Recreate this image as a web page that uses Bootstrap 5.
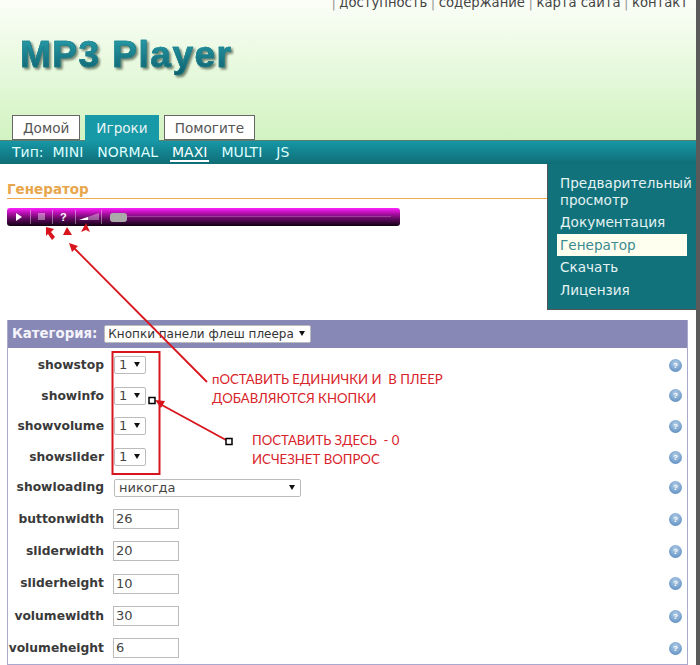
<!DOCTYPE html>
<html lang="ru">
<head>
<meta charset="UTF-8">
<title>MP3 Player</title>
<link href="https://cdn.jsdelivr.net/npm/bootstrap@5.3.0/dist/css/bootstrap.min.css" rel="stylesheet">
<style>
html, body { height: 665px; overflow: hidden; }
body { background: #fff; font-family: "DejaVu Sans", Verdana, sans-serif; color: #333; }
.page-wrap { position: relative; width: 700px; height: 665px; border-right: 4px solid #5a5a5a; overflow: hidden; }
.top-head { display: flow-root; height: 141px; background: linear-gradient(#fbfef8, #d2f3c1); border-bottom: 1px solid #5d7d70; padding-left: 12px; }
.top-links { height: 9px; font-size: 13.2px; line-height: 16px; color: #444; margin-top: -5px; padding-right: 8px; white-space: nowrap; gap: 3.5px; }
.top-links i { font-style: normal; color: #999; }
.logo-text { font: bold 37px/40px "Liberation Sans", Arial, sans-serif; letter-spacing: 1.5px; margin: 31px 0 0 8px; width: max-content;
  background: linear-gradient(#2aa0ad, #0e5f6c); -webkit-background-clip: text; background-clip: text; color: transparent;
  -webkit-text-stroke: .6px #1a7f8c;
  filter: drop-shadow(2px 2px 1px rgba(50,70,50,.65)); }
.tab-row { gap: 5px; margin-top: 40px; height: 26px; }
.tab-item { height: 25px; background: #fff; border: 1px solid #666; font-size: 13.6px; line-height: 24px; padding: 0 10px; color: #555; }
.tab-item.on { background: #1799a7; color: #e8f4f4; border-color: #1799a7; border-bottom: 0; height: 26px; }
.type-bar { height: 23px; background: linear-gradient(#1797a6, #0f6d76); color: #dff; font-size: 14px; line-height: 22px; padding-left: 12px; gap: 14px; }
.type-bar .lead-word { margin-right: -5px; }
.type-bar .on { border-bottom: 2px solid #fff; height: 21px; padding: 0 2px; margin: 0 -2px; color: #fff; }
.top-area { height: 156px; }
.content-left { width: 547px; padding-left: 7px; }
.gen-title { font-size: 13.5px; font-weight: bold; line-height: 18px; color: #e8a64c; border-bottom: 1px solid #f0ad4e; padding: 16px 0 8px; height: 35px; margin-bottom: 9px; }
.player-bar { width: 393px; height: 18px; border-radius: 3px; background: linear-gradient(#ff20ff 0, #b010a8 30%, #600a60 60%, #100010 100%); position: relative; }
.player-bar > * { position: absolute; }
.pl-sep { top: 2px; width: 1px; height: 14px; background: rgba(255,255,255,.4); }
.pl-play { left: 9px; top: 5px; border-left: 6px solid #fff; border-top: 4px solid transparent; border-bottom: 4px solid transparent; }
.pl-stop { left: 31px; top: 5px; width: 7px; height: 7px; background: rgba(255,255,255,.4); }
.pl-info { left: 53px; top: 0; color: #fff; font: bold 11px/18px "Liberation Sans", sans-serif; }
.pl-vol { left: 72px; top: 5px; width: 20px; height: 7px; background: linear-gradient(90deg, #fff 45%, rgba(255,255,255,.35) 45%); clip-path: polygon(0 100%, 100% 0, 100% 100%); }
.pl-track { left: 110px; right: 9px; top: 8px; height: 1px; background: rgba(255,255,255,.2); }
.pl-thumb { left: 103px; top: 5px; width: 17px; height: 9px; border-radius: 3px; background: #aaa; }
.side-menu { width: 149px; height: 146px; background: #12727c; border-left: 1px solid #555; border-bottom: 1px solid #555; padding: 8px 9px 0 9px; font-size: 13.6px; line-height: 16.5px; color: #e4f3f3; }
.side-menu div { padding: 3px 3px; }
.side-menu div.on { background: #fffff0; color: #3a8a90; }
.gen-panel { margin-left: 7px; width: 681px; height: 345px; border: 1px solid #a9a9cf; border-top: 0; }
.gen-cat { height: 28px; background: #8888b6; padding-left: 4px; gap: 7px; color: #f4f4fa; font-weight: bold; font-size: 13.3px; }
.gen-rows { padding-top: 2px; }
.gen-row { height: 30.6px; font-size: 12.3px; font-weight: bold; color: #3a3a3a; }
.gen-row.tall-row { height: 32.3px; }
.gen-row .row-name { width: 96px; text-align: right; margin-right: 9px; white-space: nowrap; }
.sel-box { height: 18px; border: 1px solid #bbb; border-radius: 2px; background: #fff; font: 13px/16px "DejaVu Sans", sans-serif; color: #444; padding: 0 4px; position: relative; white-space: nowrap; }
.sel-box::after { content: ""; position: absolute; right: 5px; top: 5px; border-top: 5px solid #111; border-left: 3px solid transparent; border-right: 3px solid transparent; }
.sel-short { width: 32px; margin-left: 1px; }
.sel-long { width: 187px; margin-left: 1px; }
.sel-cat { width: 207px; color: #333; font-weight: normal; font-size: 12px; padding-left: 3px; }
.num-box { width: 66px; height: 20px; border: 1px solid #bbb; background: #fff; font-size: 13px; font-weight: normal; line-height: 18px; color: #444; padding-left: 2px; }
.help-dot { width: 13px; height: 13px; border-radius: 50%; margin-left: auto; margin-right: 5px; background: radial-gradient(circle at 50% 35%, #b5cfe8, #5b8cc0 85%); color: #fff; font: bold 8px/13px "Liberation Sans", sans-serif; text-align: center; }
.note-layer { position: absolute; left: 0; top: 0; pointer-events: none; }
.note-text { position: absolute; color: #d9232a; font: 13.2px/19px Lato, "Open Sans", sans-serif; white-space: nowrap; }
</style>
</head>
<body>
<div class="page-wrap">
  <div class="top-head">
    <div class="top-links d-flex justify-content-end">
      <i>|</i><span>доступность</span><i>|</i><span>содержание</span><i>|</i><span>карта сайта</span><i>|</i><span>контакт</span>
    </div>
    <div class="logo-text">MP3 Player</div>
    <div class="tab-row d-flex">
      <div class="tab-item">Домой</div>
      <div class="tab-item on">Игроки</div>
      <div class="tab-item">Помогите</div>
    </div>
  </div>
  <div class="type-bar d-flex">
    <span class="lead-word">Тип:</span><span>MINI</span><span>NORMAL</span><span class="on">MAXI</span><span>MULTI</span><span>JS</span>
  </div>

  <div class="top-area d-flex">
    <div class="content-left">
      <div class="gen-title">Генератор</div>
      <div class="player-bar">
        <span class="pl-play"></span>
        <span class="pl-sep" style="left:23px"></span>
        <span class="pl-stop"></span>
        <span class="pl-sep" style="left:45px"></span>
        <span class="pl-info">?</span>
        <span class="pl-sep" style="left:68px"></span>
        <span class="pl-vol"></span>
        <span class="pl-sep" style="left:94px"></span>
        <span class="pl-track"></span>
        <span class="pl-thumb"></span>
      </div>
    </div>
    <div class="side-menu">
      <div>Предварительный просмотр</div>
      <div>Документация</div>
      <div class="on">Генератор</div>
      <div>Скачать</div>
      <div>Лицензия</div>
    </div>
  </div>

  <div class="gen-panel">
    <div class="gen-cat d-flex align-items-center">
      <span>Категория:</span>
      <div class="sel-box sel-cat">Кнопки панели флеш плеера</div>
    </div>
    <div class="gen-rows">
      <div class="gen-row d-flex align-items-center"><span class="row-name">showstop</span><div class="sel-box sel-short">1</div><span class="help-dot">?</span></div>
      <div class="gen-row d-flex align-items-center"><span class="row-name">showinfo</span><div class="sel-box sel-short">1</div><span class="help-dot">?</span></div>
      <div class="gen-row d-flex align-items-center"><span class="row-name">showvolume</span><div class="sel-box sel-short">1</div><span class="help-dot">?</span></div>
      <div class="gen-row d-flex align-items-center"><span class="row-name">showslider</span><div class="sel-box sel-short">1</div><span class="help-dot">?</span></div>
      <div class="gen-row d-flex align-items-center"><span class="row-name">showloading</span><div class="sel-box sel-long">никогда</div><span class="help-dot">?</span></div>
      <div class="gen-row tall-row d-flex align-items-center"><span class="row-name">buttonwidth</span><div class="num-box">26</div><span class="help-dot">?</span></div>
      <div class="gen-row tall-row d-flex align-items-center"><span class="row-name">sliderwidth</span><div class="num-box">20</div><span class="help-dot">?</span></div>
      <div class="gen-row tall-row d-flex align-items-center"><span class="row-name">sliderheight</span><div class="num-box">10</div><span class="help-dot">?</span></div>
      <div class="gen-row tall-row d-flex align-items-center"><span class="row-name">volumewidth</span><div class="num-box">30</div><span class="help-dot">?</span></div>
      <div class="gen-row tall-row d-flex align-items-center"><span class="row-name">volumeheight</span><div class="num-box">6</div><span class="help-dot">?</span></div>
    </div>
  </div>

  <!-- red notes drawn over the screenshot -->
  <svg class="note-layer" width="700" height="665" viewBox="0 0 700 665">
    <g fill="#d8141c" stroke="none">
      <polygon points="46,227 54,229 51,232 55,237 52,240 48,234 46,236"/>
      <polygon points="67,227 72,235 63,235"/>
      <polygon points="86,223 90,232 86,230 81,232"/>
      <polygon points="69,243 78,246 72,252"/>
      <polygon points="155,400 165,401 161,408"/>
    </g>
    <g stroke="#d8141c" stroke-width="1.8" fill="none">
      <line x1="74" y1="248" x2="207" y2="382"/>
      <line x1="160" y1="404" x2="226" y2="440"/>
      <rect x="112.5" y="352" width="47" height="122" stroke-width="2"/>
    </g>
    <g fill="#fff" stroke="#000" stroke-width="1.5">
      <rect x="149" y="397.5" width="6" height="6"/>
      <rect x="226" y="438.5" width="6" height="6"/>
    </g>
  </svg>
  <div class="note-text" style="left:212px;top:370px">пОСТАВИТЬ ЕДИНИЧКИ И&nbsp; В ПЛЕЕР<br>ДОБАВЛЯЮТСЯ КНОПКИ</div>
  <div class="note-text" style="left:252px;top:431px">ПОСТАВИТЬ ЗДЕСЬ&nbsp; - 0<br>ИСЧЕЗНЕТ ВОПРОС</div>
</div>
<script src="https://cdn.jsdelivr.net/npm/bootstrap@5.3.0/dist/js/bootstrap.bundle.min.js"></script>
</body>
</html>
